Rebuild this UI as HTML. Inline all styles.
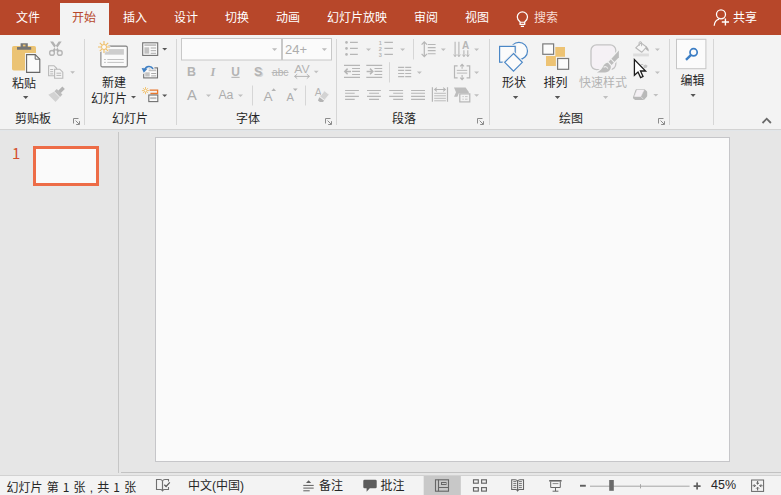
<!DOCTYPE html>
<html lang="zh-CN">
<head>
<meta charset="utf-8">
<title>PowerPoint</title>
<style>
html,body{margin:0;padding:0;}
body{width:781px;height:495px;overflow:hidden;position:relative;background:#e6e6e6;
 font-family:"Liberation Sans","Noto Sans CJK SC",sans-serif;font-size:12px;color:#262626;}
.abs{position:absolute;}
#tabbar{left:0;top:0;width:781px;height:35px;background:#b7472a;}
.tab{position:absolute;top:0;height:35px;line-height:37px;color:#fff;font-size:12px;white-space:nowrap;}
#tab-active{left:60px;top:3px;width:49px;height:32px;background:#f3f3f3;}
#ribbon{left:0;top:35px;width:781px;height:94px;background:#f3f3f3;}
#ribbonline{left:0;top:129px;width:781px;height:1px;background:#d3d3d3;border-bottom:1px solid #e2e6e9;}
.sep{position:absolute;top:39px;width:1px;height:86px;background:#d6d6d6;}
.glabel{position:absolute;top:111px;height:16px;line-height:16px;font-size:12px;color:#262626;white-space:nowrap;}
.lbl{position:absolute;font-size:12px;line-height:14px;color:#262626;white-space:nowrap;}
.dis{color:#b4b4b4;}
svg{position:absolute;overflow:visible;}
#leftpanel{left:0;top:131px;width:118px;height:344px;background:#e6e6e6;}
#paneldiv{left:118px;top:132px;width:1px;height:341px;background:#c6c6c6;}
#slide{left:155px;top:137px;width:573px;height:323px;background:#fafafa;border:1px solid #c6c6c9;}
#thumb{left:33px;top:146px;width:60px;height:34px;background:#fafafa;border:3px solid #ed6c47;}
#thumbnum{left:12px;top:143px;font-size:15px;color:#d4502e;line-height:20px;font-family:"Noto Sans CJK SC","Liberation Sans",sans-serif;}
#statusbar{left:0;top:475px;width:781px;height:20px;background:#f3f3f3;border-top:1px solid #d2d2d2;box-sizing:border-box;}
#wsline{left:121px;top:472px;width:660px;height:1px;background:#c2c2c2;}
.st{position:absolute;top:476px;height:20px;line-height:21px;word-spacing:0.8px;font-size:12px;color:#262626;white-space:nowrap;}
.d{position:relative;top:0px;font-family:"Noto Sans CJK SC","Liberation Sans",sans-serif;}
</style>
</head>
<body>
<div id="tabbar" class="abs"></div>
<div id="tab-active" class="abs"></div>
<div class="tab" style="left:16px;">文件</div>
<div class="tab" style="left:72px;color:#b7472a;">开始</div>
<div class="tab" style="left:123px;">插入</div>
<div class="tab" style="left:174px;">设计</div>
<div class="tab" style="left:225px;">切换</div>
<div class="tab" style="left:276px;">动画</div>
<div class="tab" style="left:327px;">幻灯片放映</div>
<div class="tab" style="left:414px;">审阅</div>
<div class="tab" style="left:465px;">视图</div>
<div class="tab" style="left:534px;color:#f7ddd5;">搜索</div>
<div class="tab" style="left:733px;">共享</div>

<div id="ribbon" class="abs"></div>
<div id="ribbonline" class="abs"></div>
<div class="sep" style="left:84px;"></div>
<div class="sep" style="left:176px;"></div>
<div class="sep" style="left:336px;"></div>
<div class="sep" style="left:489px;"></div>
<div class="sep" style="left:669px;"></div>
<div class="sep" style="left:713px;"></div>

<div class="glabel" style="left:15px;">剪贴板</div>
<div class="glabel" style="left:112px;">幻灯片</div>
<div class="glabel" style="left:236px;">字体</div>
<div class="glabel" style="left:392px;">段落</div>
<div class="glabel" style="left:559px;">绘图</div>

<div class="lbl" style="left:12px;top:76.700px;">粘贴</div>
<div class="lbl" style="left:102px;top:76px;">新建</div>
<div class="lbl" style="left:91px;top:91.500px;">幻灯片</div>
<div class="lbl" style="left:502px;top:76px;">形状</div>
<div class="lbl" style="left:543.5px;top:76px;">排列</div>
<div class="lbl dis" style="left:579px;top:76px;">快速样式</div>
<div class="lbl" style="left:680.500px;top:74.300px;">编辑</div>
<svg id="ico" width="781" height="495" viewBox="0 0 781 495" style="left:0;top:0;pointer-events:none;">
<!-- ===== clipboard group ===== -->
<g>
 <rect x="12" y="46" width="24" height="24.5" rx="1.8" fill="#ebc374"/>
 <path d="M17 47h14.2v2.8H17z M20.6 43.2h7.2v4h-7.2z" fill="#757575"/>
 <rect x="22.9" y="44.6" width="2.6" height="1.8" fill="#ebc374"/>
 <path d="M26.6 54.6h8.6l4.6 4.6v13.2H26.6z" fill="#f3f3f3" stroke="#f3f3f3" stroke-width="3.2"/>
 <path d="M26.6 54.6h8.6l4.6 4.6v13.2H26.6z" fill="#fbfbfb" stroke="#666" stroke-width="1.1"/>
 <path d="M35.2 54.6v4.6h4.6" fill="none" stroke="#666" stroke-width="1"/>
 <path d="M23 96h5.4l-2.7 2.9z" fill="#555"/>
</g>
<!-- scissors (disabled) -->
<g fill="none" stroke="#b7b7b7" stroke-width="1.400">
 <circle cx="52" cy="52.900" r="2.400"/>
 <circle cx="59.800" cy="52.900" r="2.400"/>
</g>
<path d="M50.1 41.5h3l6.200 9.100-1.900 1.400z M61.700 41.500h-3l-6.200 9.100 1.900 1.400z" fill="#b2b2b2"/>
<!-- copy (disabled) -->
<g fill="#f4f4f4" stroke="#b9b9b9" stroke-width="1.1">
 <path d="M48.6 65.7h5.4l2.6 2.6v7.4h-8z"/>
 <path d="M54.6 69.2h5.2l3 3v6h-8.2z"/>
 <path d="M50.2 69.5h3 M50.2 71.7h3 M50.2 73.9h3 M56.4 73.2h4.8 M56.4 75.4h4.8" stroke-width="1"/>
</g>
<path d="M70.2 71.2h4.8l-2.4 2.5z" fill="#bdbdbd"/>
<!-- format painter (disabled) -->
<g transform="translate(57.800,93.600) rotate(45)">
 <rect x="-1.700" y="-8.200" width="3.400" height="6" fill="#b4b4b4"/>
 <rect x="-4" y="-2.600" width="8" height="3.400" fill="#bdbdbd"/>
 <path d="M-4 1.400h8l0.400 6.200h-10.200z" fill="#d2d2d2"/>
</g>
<!-- launcher clipboard -->
<g id="launch1" fill="none" stroke="#8a8a8a" stroke-width="1">
 <path d="M73.5 123.5v-5h5"/>
 <path d="M75.6 120.6l3.6 3.6 M79.5 121.2v3.3h-3.3" />
</g>
</svg>
<svg width="781" height="495" viewBox="0 0 781 495" style="left:0;top:0;pointer-events:none;">
<!-- ===== slides group ===== -->
<!-- new slide -->
<rect x="100.900" y="46.100" width="26.400" height="20.800" rx="1.400" fill="#fafafa" stroke="#808080" stroke-width="1.100"/>
<rect x="104.700" y="49.100" width="19.200" height="5.600" fill="#cdcdcd"/>
<path d="M104 59.500h1.900 M107.300 59.500h16.500 M104 62.400h1.900 M107.300 62.400h16.500" stroke="#c2c2c2" stroke-width="1"/>
<g stroke="#f3f3f3" stroke-width="3" stroke-linecap="round">
 <path d="M104 42v10 M99 47h10 M100.500 43.500l7 7 M107.500 43.500l-7 7"/>
</g>
<g stroke="#f0c06a" stroke-width="1.150">
 <path d="M104 41v12 M98 47h12 M99.800 42.800l8.400 8.400 M108.200 42.800l-8.400 8.400"/>
</g>
<circle cx="104" cy="47" r="2.500" fill="#fafafa" stroke="#f0c06a" stroke-width="1"/>
<path d="M131 96h5l-2.500 2.600z" fill="#555"/>
<!-- layout -->
<rect x="142.700" y="42.800" width="15" height="12.600" fill="#fafafa" stroke="#707070" stroke-width="1.100"/>
<rect x="144.400" y="44.200" width="11.800" height="1.800" fill="#c2c2c2"/>
<rect x="144.400" y="47.300" width="4.800" height="6.400" fill="#c2c2c2"/>
<path d="M150.700 48h5.400 M150.700 50.700h5.400 M150.700 53.300h5.400" stroke="#a2a2a2" stroke-width="0.900"/>
<path d="M162.200 48h5l-2.500 2.600z" fill="#555"/>
<!-- reset -->
<rect x="143.700" y="67.900" width="13.800" height="10" fill="#fafafa" stroke="#707070" stroke-width="1.100"/>
<rect x="148.600" y="69.500" width="7.600" height="1.700" fill="#c2c2c2"/>
<rect x="145.200" y="72.300" width="4.500" height="4.200" fill="#c2c2c2"/>
<path d="M151.200 73.500h5 M151.200 75.900h5" stroke="#a2a2a2" stroke-width="0.900"/>
<path d="M153.200 69a4.600 4.600 0 0 0-8.600 0.600" fill="none" stroke="#f3f3f3" stroke-width="3.800"/>
<path d="M141 67.600l7 0.800-4.400 4.800z" fill="#f3f3f3" stroke="#f3f3f3" stroke-width="1.200"/>
<path d="M153 68.800a4.500 4.500 0 0 0-8.200 0.800" fill="none" stroke="#3f7fc3" stroke-width="1.700"/>
<path d="M141.600 68l5.900 0.700-3.700 4z" fill="#3f7fc3"/>
<!-- section -->
<g stroke="#f0c06a" stroke-width="0.900">
 <path d="M145.500 87v7.200 M141.900 90.600h7.200 M143 88.100l5 5 M148 88.100l-5 5"/>
</g>
<circle cx="145.500" cy="90.600" r="1.400" fill="#fafafa" stroke="#f0c06a" stroke-width="0.800"/>
<path d="M149.600 90.200h8v3.300h-7.200" fill="none" stroke="#e8772e" stroke-width="1.300"/>
<rect x="148.800" y="95" width="9" height="6.600" fill="#fafafa" stroke="#707070" stroke-width="1.100"/>
<rect x="150.200" y="97.200" width="6.200" height="1.900" fill="#bdbdbd"/>
<path d="M162.200 94.500h5l-2.500 2.600z" fill="#555"/>
</svg>
<svg width="781" height="495" viewBox="0 0 781 495" style="left:0;top:0;pointer-events:none;font-family:'Liberation Sans',sans-serif;">
<!-- ===== font group ===== -->
<rect x="181.5" y="38.5" width="100" height="21.5" fill="#fbfbfb" stroke="#c8c8c8" stroke-width="1"/>
<rect x="282.5" y="38.5" width="49" height="21.5" fill="#fbfbfb" stroke="#c8c8c8" stroke-width="1"/>
<path d="M272 48.2h5.2l-2.6 2.7z M321.8 48.2h5.2l-2.6 2.7z" fill="#bdbdbd"/>
<text x="285" y="54.3" font-size="13" fill="#adadad">24+</text>
<g fill="#b4b4b4">
 <text x="187" y="75.8" font-size="12.4" font-weight="bold">B</text>
 <text x="210.6" y="75.8" font-size="12.4" font-style="italic" font-family="'Liberation Serif',serif" font-weight="bold">I</text>
 <text x="231.2" y="75.6" font-size="12" font-weight="bold">U</text>
 <rect x="231.4" y="76.8" width="8.2" height="1.1"/>
 <text x="255.2" y="77" font-size="12.4" font-weight="bold" fill="#d6d6d6">S</text>
 <text x="254" y="75.8" font-size="12.4" font-weight="bold">S</text>
 <text x="272" y="75.6" font-size="10.5" textLength="16.4" lengthAdjust="spacingAndGlyphs">abc</text>
 <rect x="271.6" y="72" width="17" height="0.9"/>
 <text x="294.2" y="73" font-size="10.8" textLength="15.4" lengthAdjust="spacingAndGlyphs">AV</text>
 <path d="M294.6 76.4h14.8 M297.2 74.2l-2.6 2.2 2.6 2.2 M306.8 74.2l2.6 2.2-2.6 2.2" fill="none" stroke="#b4b4b4" stroke-width="1"/>
 <path d="M313.8 70.8h4.8l-2.4 2.5z" fill="#c0c0c0"/>
 <!-- row 3 -->
 <text x="187" y="100" font-size="14.6" fill="#adadad" textLength="9.800" lengthAdjust="spacingAndGlyphs">A</text>
 <path d="M206 94.5h5l-2.5 2.6z" fill="#c0c0c0"/>
 <text x="218.400" y="99.200" font-size="12" fill="#adadad" textLength="15" lengthAdjust="spacingAndGlyphs">Aa</text>
 <path d="M238 94.5h5l-2.5 2.6z" fill="#c0c0c0"/>
 <text x="263.400" y="101" font-size="13.600" fill="#adadad">A</text>
 <path d="M271.400 91h4.600l-2.300-2.700z"/>
 <text x="286.400" y="101" font-size="11.200" fill="#adadad">A</text>
 <path d="M292.900 88.400h4.800l-2.400 2.600z"/>
 <text x="314.800" y="96" font-size="10.500">A</text>
 <path d="M324.400 90.800l4.800 3.700-4.600 5.800-4.800-3.600z" fill="#d3d3d3" stroke="#f3f3f3" stroke-width="0.800"/>
 <path d="M319.400 97.200l4.800 3.600-1.300 1.300h-3l-2-1.600z" fill="#b4b4b4"/>
</g>
<path d="M252.5 85.5v20 M305.5 85.5v20" stroke="#d6d6d6" stroke-width="1"/>
</svg>
<svg width="781" height="495" viewBox="0 0 781 495" style="left:0;top:0;pointer-events:none;font-family:'Liberation Sans',sans-serif;">
<!-- ===== paragraph group ===== -->
<g fill="none" stroke="#b6b6b6" stroke-width="1.1">
 <!-- bullets -->
 <path d="M350 42.4h7.8 M350 48.4h7.8 M350 54.4h7.8"/>
 <!-- numbering lines -->
 <path d="M384.4 42.4h8.5 M384.4 48.4h8.5 M384.4 54.4h8.5"/>
 <!-- line spacing -->
 <path d="M427.8 44.5h7.8 M427.8 47.6h7.8 M427.8 50.6h7.8 M427.8 53.7h7.8"/>
 <path d="M424.3 42v14.4 M421.6 44.6l2.7-2.8 2.7 2.8 M421.6 53.8l2.7 2.8 2.7-2.8" stroke-width="1.2"/>
 <!-- text direction -->
 <path d="M455.1 41.8v14.6 M458.9 41.8v14.6 M463.9 50.2v6.2 M467.8 50.2v6.2"/>
 <path d="M453.6 54.6l1.5 2 1.5-2 M457.4 54.6l1.5 2 1.5-2 M462.4 54.6l1.5 2 1.5-2 M466.3 54.6l1.5 2 1.5-2" stroke-width="1"/>
 <!-- decrease indent -->
 <path d="M344 65.4h16 M344 77.4h16 M352.1 68.5h7.9 M352.1 71.4h7.9 M352.1 74.5h7.9"/>
 <path d="M344.8 71.4h6.2 M347.6 68.6l-2.8 2.8 2.8 2.8" stroke-width="1.5"/>
 <!-- increase indent -->
 <path d="M366.3 65.4h15.9 M366.3 77.4h15.9 M374.5 68.5h7.7 M374.5 71.4h7.7 M374.5 74.5h7.7"/>
 <path d="M366.6 71.4h6.2 M370 68.6l2.8 2.8-2.8 2.8" stroke-width="1.5"/>
 <!-- columns -->
 <path d="M398.1 67.4h6.1 M405.2 67.4h6 M398.1 70.4h6.1 M405.2 70.4h6 M398.1 73.5h6.1 M405.2 73.5h6 M398.1 76.6h6.1 M405.2 76.6h6"/>
 <!-- align text -->
 <path d="M457.6 65.9h-3.1v12h3.1 M466.6 65.9h3.1v12h-3.1" stroke-width="1.2"/>
 <path d="M456.8 70.4h10.4 M456.8 73.1h10.4" stroke-width="0.9"/>
 <path d="M462.1 64.6v4.2 M460.2 66.4l1.9-2 1.9 2 M462.1 75v4.4 M460.2 77.6l1.9 2 1.9-2"/>
 <!-- align left / center / right / justify -->
 <path d="M345.1 90.5h13.8 M345.1 93.3h9.6 M345.1 96.4h13.8 M345.1 99.4h9.6"/>
 <path d="M367 90.5h13.9 M369.1 93.3h9.9 M367 96.4h13.9 M369.1 99.4h9.9"/>
 <path d="M389.2 90.5h13.9 M393.2 93.3h9.9 M389.2 96.4h13.9 M393.2 99.4h9.9"/>
 <path d="M411.1 90.5h13.9 M411.1 93.3h13.9 M411.1 96.4h13.9 M411.1 99.4h13.9"/>
 <!-- distributed -->
 <path d="M432.4 87.2v14.6 M447.5 87.2v14.6" stroke-width="1.2"/>
 <path d="M434.2 93.3h11.7 M434.2 95.8h11.7 M434.2 98.3h11.7 M434.2 100.8h11.7" stroke-width="0.9"/>
 <path d="M434.6 89.5h10.8 M436.8 87.6l-2.2 1.9 2.2 1.9 M443.2 87.6l2.2 1.9-2.2 1.9"/>
</g>
<g fill="#b6b6b6">
 <circle cx="346.5" cy="42.4" r="1.3"/><circle cx="346.5" cy="48.4" r="1.3"/><circle cx="346.5" cy="54.4" r="1.3"/>
 <text x="378.8" y="44.6" font-size="5.6" font-weight="bold">1</text>
 <text x="378.8" y="50.6" font-size="5.6" font-weight="bold">2</text>
 <text x="378.8" y="56.6" font-size="5.6" font-weight="bold">3</text>
 <text x="462" y="48.7" font-size="10.2" font-weight="bold" textLength="7.2" lengthAdjust="spacingAndGlyphs">A</text>
 <!-- smartart -->
 <path d="M454 87.6h11.6l3.2 4.4v1.2h-10l-1.4 3.6h-3.4l2-4.6z" fill="#bdbdbd"/>
</g>
<rect x="459.8" y="93.9" width="10" height="8" fill="#f3f3f3" stroke="#b6b6b6" stroke-width="1.2"/>
<path d="M462.4 96.6h1.4 M465 96.6h2.6 M462.4 99.2h1.4 M465 99.2h2.6" stroke="#c6c6c6" stroke-width="1"/>
<g fill="#c0c0c0">
 <path d="M366 48.4h5l-2.5 2.6z M400.1 48.4h5l-2.5 2.6z M440.8 48.4h5l-2.5 2.6z M474.1 48.4h5l-2.5 2.6z"/>
 <path d="M416.9 71.4h5l-2.5 2.6z M474.1 71.4h5l-2.5 2.6z M474.1 94.2h5l-2.5 2.6z"/>
</g>
<path d="M413.5 39v20.5 M389.5 62.2v20.3" stroke="#d6d6d6" stroke-width="1"/>
</svg>
<svg width="781" height="495" viewBox="0 0 781 495" style="left:0;top:0;pointer-events:none;font-family:'Liberation Sans',sans-serif;">
<!-- ===== drawing group ===== -->
<!-- shapes -->
<g fill="#fbfbfb" stroke="#4b87c6" stroke-width="1.2">
 <circle cx="518.900" cy="50.900" r="8.600"/>
 <rect x="499.600" y="46.400" width="15.600" height="15.800" stroke="#f3f3f3" stroke-width="3.400"/>
 <rect x="499.600" y="46.400" width="15.600" height="15.800"/>
 <path d="M513.500 53.500l8.800 8.800-8.800 8.800-8.800-8.800z" stroke="#f3f3f3" stroke-width="3.400"/>
 <path d="M513.500 53.500l8.800 8.800-8.800 8.800-8.800-8.800z"/>
</g>
<path d="M512.9 96.1h5.4l-2.7 2.9z M554.8 96.1h5.4l-2.7 2.9z" fill="#555"/>
<!-- arrange -->
<rect x="546" y="47" width="19" height="19" fill="#edc374"/>
<rect x="542.8" y="43.9" width="10.8" height="10.4" fill="#fbfbfb" stroke="#f3f3f3" stroke-width="3.4"/>
<rect x="557.6" y="58.5" width="11" height="10.8" fill="#fbfbfb" stroke="#f3f3f3" stroke-width="3.4"/>
<rect x="542.8" y="43.9" width="10.8" height="10.4" fill="#fbfbfb" stroke="#7a7a7a" stroke-width="1.2"/>
<rect x="557.6" y="58.5" width="11" height="10.8" fill="#fbfbfb" stroke="#7a7a7a" stroke-width="1.2"/>
<!-- quick styles (disabled) -->
<rect x="591" y="44.800" width="24.800" height="24.800" rx="5.600" fill="#f5f1f5" stroke="#c3c3c3" stroke-width="1.300"/>
<g fill="#f3f3f3" stroke="#f3f3f3" stroke-width="2.600" stroke-linejoin="round">
 <path d="M618.900 50.600V57.200L614.400 62L611.400 58.800Z"/>
 <path d="M610.800 59.600L613.800 62.700L611.600 64.900L608.600 61.800Z"/>
 <path d="M608 62.800L610.700 65.700C611.500 69 609 72.400 605 72.400L596.900 72.400C600.500 71 602.300 68 603.300 66C604.300 64 606.400 62.500 608 62.800Z"/>
</g>
<g fill="#bdbdbd">
 <path d="M618.900 50.600V57.200L614.400 62L611.400 58.800Z"/>
 <path d="M610.800 59.600L613.800 62.700L611.600 64.900L608.600 61.800Z"/>
 <path d="M608 62.800L610.700 65.700C611.500 69 609 72.400 605 72.400L596.900 72.400C600.500 71 602.300 68 603.300 66C604.300 64 606.400 62.500 608 62.800Z"/>
</g>
<path d="M603.600 67.400c1.400-1.400 3.400-0.800 4.200 1.200" fill="none" stroke="#ececec" stroke-width="1.100"/>
<path d="M603 96.1h5.2l-2.600 2.800z" fill="#c0c0c0"/>
<!-- fill bucket (disabled) -->
<path d="M641 42.900L646.500 47L641.700 52.300L635.700 47.800Z" fill="#f7f7f7" stroke="#b9b9b9" stroke-width="1.100" stroke-linejoin="round"/>
<path d="M639.100 46v-3.100a1.250 1.250 0 0 1 2.500 0v3.300" fill="none" stroke="#b9b9b9" stroke-width="1"/>
<path d="M646.300 46.400c1.900 1 2.800 3 2.300 5.200l-3.400-2.800z" fill="#b4b4b4"/>
<rect x="633.200" y="53.500" width="15.700" height="2.900" fill="#dddddd"/>
<!-- outline pen remnants -->
<path d="M643.200 65.400l2.600-1 1.800 1.400-1 2-2.600 0.400z" fill="#c4c4c4"/>
<path d="M640.800 64.500h2.400" stroke="#c4c4c4" stroke-width="1"/>
<!-- effects -->
<path d="M636.700 89.300h7.500q0.800 0 1.300 0.600l1.300 1.400q0.400 0.400 0.400 1v3.400q0 0.600-0.400 1l-2.400 2.900q-0.500 0.500-1.200 0.500h-7.300q-0.800 0-1.400-0.500l-1.200-1.200q-0.500-0.500-0.300-1.200l2.300-6.800q0.400-1.100 1.400-1.100z" fill="#b9b9b9"/>
<path d="M637 90.100h6.900l-3.100 6.300h-6.300z" fill="#f4f0f4" stroke="#f4f0f4" stroke-width="0.600" stroke-linejoin="round"/>
<path d="M641 96.700l2.600 2.800" stroke="#e6e6e6" stroke-width="0.700"/>
<g fill="#c0c0c0">
 <path d="M654.900 48.400h5l-2.500 2.600z M654.900 71.400h5l-2.500 2.600z M653.300 94h5l-2.500 2.600z"/>
</g>
<!-- mouse cursor -->
<path d="M634.400 59.600V75.200L638 72L640.600 77.600L643 76.500L640.500 71H645.600Z" fill="#fff" stroke="#1c1c1c" stroke-width="1.300" stroke-linejoin="miter"/>
<!-- ===== editing ===== -->
<rect x="676.500" y="39.300" width="29.400" height="29.400" fill="#fbfbfb" stroke="#c6c6c6" stroke-width="1"/>
<circle cx="693.600" cy="52.300" r="3.600" fill="none" stroke="#3b7dc4" stroke-width="1.700"/>
<path d="M690.800 55.200l-4.800 4.600" stroke="#3b7dc4" stroke-width="2.400"/>
<path d="M690.500 94.100h5.200l-2.600 2.800z" fill="#555"/>
<!-- collapse chevron -->
<path d="M762.500 123l4.200-4.300 4.200 4.300" fill="none" stroke="#6a6a6a" stroke-width="1.8"/>
<!-- launchers -->
<g fill="none" stroke="#8c8c8c" stroke-width="1">
 <path d="M325.500 123.500v-5h5 M327.600 120.600l3.600 3.600 M331.500 121.200v3.300h-3.300"/>
 <path d="M477.500 123.500v-5h5 M479.600 120.600l3.600 3.600 M483.500 121.200v3.300h-3.300"/>
 <path d="M658.500 123.500v-5h5 M660.600 120.600l3.600 3.600 M664.500 121.200v3.300h-3.300"/>
</g>
<!-- ===== tab bar icons ===== -->
<g fill="none" stroke="#fff" stroke-width="1.100">
 <path d="M520.100 22c-1.900-1.500-2.800-3-2.800-5a5.100 5.100 0 0 1 10.200 0c0 2-0.900 3.500-2.800 5v2.400h-4.600z" stroke-width="1.250"/>
 <path d="M520.100 22.300h4.600 M520.800 26.400h3.200" stroke-width="1.100"/>
 <circle cx="721" cy="14.3" r="4.5" stroke-width="1.3"/>
 <path d="M714.2 25.8c0.3-3.6 2.200-5.800 4.800-6.600" stroke-width="1.25"/>
 <path d="M721.8 22h7.200 M725.400 18.600v6.800" stroke-width="1.400"/>
</g>
</svg>


<div id="leftpanel" class="abs"></div>
<div id="paneldiv" class="abs"></div>
<div id="thumbnum" class="abs">1</div>
<div id="thumb" class="abs"></div>
<div id="slide" class="abs"></div>

<div id="wsline" class="abs"></div>
<div id="statusbar" class="abs"></div>
<div class="st" style="left:6.500px;">幻灯片 第 <span class="d">1</span> 张 , 共 <span class="d">1</span> 张</div>
<div class="st" style="left:188px;">中文(中国)</div>
<div class="st" style="left:319px;">备注</div>
<div class="st" style="left:380.500px;">批注</div>
<div class="st" style="left:711px;top:474.500px;font-size:12.500px;">45%</div>
<svg width="781" height="495" viewBox="0 0 781 495" style="left:0;top:0;pointer-events:none;">
<!-- spelling book icon -->
<g fill="none" stroke="#707070" stroke-width="1.1">
 <path d="M162.500 481c-0.500-1-1.300-1.500-2.400-1.500h-3.600v10h3.900c1 0 1.700 0.300 2.100 1"/>
 <path d="M162.500 481c0.500-1 1.300-1.500 2.400-1.500h3.600v2 M168.500 487v2.500h-3.900c-1 0-1.700 0.300-2.100 1"/>
 <path d="M162.500 481v9.600" stroke-width="1.200"/>
</g>
<path d="M161.300 490.200h2.400l-1.200 1.600z" fill="#707070"/>
<path d="M164.300 484.700l1.800 1.800 3.700-4.200" fill="none" stroke="#5c5c5c" stroke-width="1.250"/>
<!-- notes icon -->
<path d="M308.600 480.200l2.600 2.800h-5.200z" fill="#5e5e5e"/>
<path d="M303.300 485.400h10.400 M303.300 488.100h10.400 M303.300 490.800h6.400" stroke="#5e5e5e" stroke-width="1"/>
<!-- comment icon -->
<path d="M364.600 479.700h10.800a1.300 1.300 0 0 1 1.300 1.300v6a1.300 1.300 0 0 1-1.300 1.300h-5.600l-3.200 3.500v-3.500h-2a1.300 1.300 0 0 1-1.300-1.300v-6a1.300 1.300 0 0 1 1.300-1.300z" fill="#5c5c5c"/>
<!-- selected view bg -->
<rect x="423.700" y="476" width="37.100" height="19" fill="#c8c8c8"/>
<!-- normal view -->
<g fill="none" stroke="#666" stroke-width="1.1">
 <rect x="435.500" y="479.800" width="13" height="11.400"/>
 <path d="M438.500 479.800v11.400 M438.500 487.500h10"/>
 <rect x="441.500" y="482.500" width="4.500" height="2" stroke-width="1"/>
</g>
<!-- slide sorter -->
<g fill="none" stroke="#666" stroke-width="1.150">
 <rect x="473.500" y="479.800" width="4.800" height="3.400"/>
 <rect x="481.600" y="479.800" width="4.800" height="3.400"/>
 <rect x="473.500" y="487.600" width="4.800" height="3.500"/>
 <rect x="481.600" y="487.600" width="4.800" height="3.500"/>
</g>
<!-- reading view -->
<g fill="none" stroke="#666" stroke-width="1.1">
 <path d="M517.600 481c-0.500-0.900-1.300-1.300-2.400-1.300h-3.500v9.800h3.800c1 0 1.700 0.300 2.100 1c0.400-0.700 1.100-1 2.100-1h3.800v-9.800h-3.500c-1.100 0-1.900 0.400-2.400 1.300z"/>
 <path d="M517.600 481v9.600" stroke-width="1.200"/>
 <path d="M513.300 481.600h3 M513.300 483.600h3 M513.300 485.600h3 M513.300 487.600h3 M518.900 481.600h3 M518.900 483.600h3 M518.900 485.600h3 M518.900 487.600h3" stroke-width="0.900"/>
</g>
<path d="M516.400 490.200h2.400l-1.200 1.500z" fill="#666"/>
<!-- slideshow -->
<g fill="none" stroke="#666" stroke-width="1">
 <path d="M549.200 480.800h12.400" stroke-width="1.600"/>
 <path d="M550.700 481.500v6h9.600v-6 M555.500 487.500v3.600 M552.600 491.200h5.800"/>
 <path d="M552.600 483.600h5.800" stroke="#8a8a8a"/>
</g>
<!-- zoom slider -->
<rect x="580" y="484.800" width="5.800" height="1.900" fill="#5e5e5e"/>
<path d="M590 486.200h99.600" stroke="#a6a6a6" stroke-width="1"/>
<path d="M640.500 484.200v4.200" stroke="#a6a6a6" stroke-width="1"/>
<rect x="609.200" y="480" width="4.600" height="10.800" fill="#6a6a6a"/>
<path d="M693.600 486.100h7 M697.100 482.600v7" stroke="#5e5e5e" stroke-width="1.700"/>
<!-- fit to window -->
<g fill="none" stroke="#666" stroke-width="1">
 <rect x="751.600" y="480" width="12" height="11.400"/>
 <path d="M757.6 481v3 M757.6 487.400v3 M752.600 485.700h3 M759.600 485.700h3" stroke-width="1.1"/>
 <path d="M756.2 482.800l1.400 1.400 1.400-1.400 M756.200 488.600l1.400-1.400 1.400 1.400 M754 484.300l1.400 1.400-1.400 1.400 M761.200 484.300l-1.400 1.400 1.400 1.400" stroke-width="1"/>
</g>
</svg>

</body>
</html>
